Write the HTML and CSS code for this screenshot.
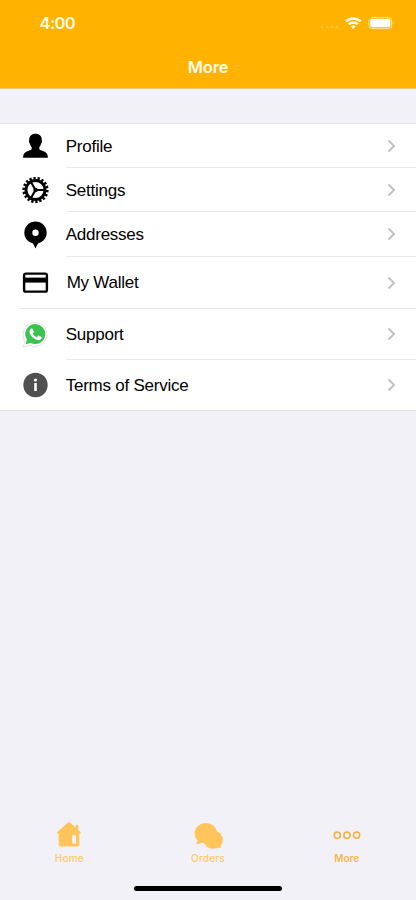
FILE: index.html
```
<!DOCTYPE html>
<html lang="en">
<head>
<meta charset="utf-8">
<meta name="viewport" content="width=device-width, initial-scale=1">
<title>More</title>
<link rel="stylesheet" href="styles.css">
</head>
<body>
<div class="screen">
  <header class="header">
    <div class="status">
      <span class="time">4:00</span>
      <svg class="indicators" width="76" height="16" viewBox="0 0 76 16">
        <g fill="#ffc134"><circle cx="2" cy="12" r="1.600"/><circle cx="7" cy="12" r="1.600"/><circle cx="12" cy="12" r="1.600"/><circle cx="17" cy="12" r="1.600"/></g>
        <g fill="none" stroke="#fffbe6" stroke-width="2.500"><path d="M26.100 6.300a10.400 10.400 0 0 1 14.400 0"/><path d="M28.700 9.300a6.500 6.500 0 0 1 9.200 0"/></g>
        <path d="M30.900 11.400a3.600 3.600 0 0 1 4.800 0l-2.400 2.600z" fill="#fffbe6"/>
        <rect x="48.900" y="2.400" width="22.800" height="11.200" rx="3.200" fill="none" stroke="#ffdf91"/>
        <rect x="50.200" y="3.800" width="20.200" height="8.400" rx="1.800" fill="#fff"/>
        <path d="M73.200 6.200q1.700 1.800 0 3.600z" fill="#ffdf91"/>
      </svg>
    </div>
    <h1 class="title">More</h1>
  </header>

  <main class="list">
    <a class="row">
      <svg class="icon" viewBox="0 0 28 28"><path d="M14 1.800c4 0 6.300 2.400 6.300 6.100 0 1 .3 1 .2 2.200-.1 1-.8 1.200-1 2-.4 1.800-1.700 2.700-1.800 3.800 0 1.300.6 2 1.800 2.400 3.500 1.200 6.900 2 6.900 7.500H1.600c0-5.500 3.400-6.300 6.900-7.500 1.200-.4 1.800-1.100 1.800-2.400-.1-1.100-1.400-2-1.800-3.800-.2-.8-.9-1-1-2-.1-1.200.2-1.200.2-2.200C7.700 4.200 10 1.800 14 1.800z"/></svg>
      <div class="cell"><span class="label">Profile</span><svg class="chevron" viewBox="0 0 9 14"><path d="M1.500 1.500L7 7l-5.500 5.500"/></svg></div>
    </a>
    <a class="row">
      <svg class="icon" viewBox="0 0 28 28"><g fill="none" stroke="#000"><circle cx="14" cy="14" r="9.500" stroke-width="2.900"/><circle cx="14" cy="14" r="11.800" stroke-width="2.600" pathLength="72" stroke-dasharray="2.200 1.800"/><path d="M14.500 14H24M14 14L9.300 5.800M14 14L9.300 22.200" stroke-width="2.100"/></g><circle cx="14" cy="14" r="2.200"/></svg>
      <div class="cell"><span class="label settings">Settings</span><svg class="chevron" viewBox="0 0 9 14"><path d="M1.500 1.500L7 7l-5.500 5.500"/></svg></div>
    </a>
    <a class="row addresses">
      <svg class="icon" viewBox="0 0 28 28"><path fill-rule="evenodd" d="M14 .5A11.200 11.200 0 0 0 2.800 11.700c0 5 3.200 8.800 7.800 10.400 1.500.6 2 3 3.400 5.300 1.400-2.300 1.900-4.700 3.400-5.300 4.600-1.600 7.800-5.400 7.800-10.400A11.200 11.200 0 0 0 14 .5zm0 8a3.200 3.200 0 1 1 0 6.400 3.200 3.200 0 0 1 0-6.400z"/></svg>
      <div class="cell"><span class="label">Addresses</span><svg class="chevron" viewBox="0 0 9 14"><path d="M1.500 1.500L7 7l-5.500 5.500"/></svg></div>
    </a>
    <a class="row wallet">
      <svg class="icon" viewBox="0 0 28 28"><rect x="2.600" y="4.600" width="22.800" height="18" rx="1.700" fill="none" stroke="#000" stroke-width="2.400"/><path d="M2 8.600h24v5H2z"/></svg>
      <div class="cell"><span class="label">My Wallet</span><svg class="chevron" viewBox="0 0 9 14"><path d="M1.500 1.500L7 7l-5.500 5.500"/></svg></div>
    </a>
    <a class="row tall">
      <svg class="icon" viewBox="0 0 28 28"><path d="M1.700 26l1.700-6.100A12 12 0 1 1 8.400 24.300z" fill="#fff" stroke="#d8dcd9" stroke-width=".8"/><path d="M4.100 23.300l1.300-4.700A10 10 0 1 1 9.200 22z" fill="#3cc251"/><path d="M9.600 7.800c.5-.5 1.300-.4 1.600.2l1 2.300c.2.500.1.900-.3 1.300l-.7.800c.9 1.800 2.300 3 4.100 3.800l1.100-1.300c.3-.4.700-.5 1.200-.2l2.100 1c.5.300.6.700.4 1.300-.4 1.600-2 2.500-3.700 2.100-4.300-1-7.400-4-8.300-7.500-.4-1.500.3-2.900 1.500-3.800z" fill="#fff"/></svg>
      <div class="cell"><span class="label support">Support</span><svg class="chevron" viewBox="0 0 9 14"><path d="M1.500 1.500L7 7l-5.500 5.500"/></svg></div>
    </a>
    <a class="row tall">
      <svg class="icon" viewBox="0 0 28 28"><circle cx="14" cy="14" r="12.200" fill="#505050"/><g fill="#fff"><circle cx="14" cy="9" r="1.600"/><path d="M12.700 12h2.600v8h-2.600z"/></g></svg>
      <div class="cell"><span class="label">Terms of Service</span><svg class="chevron" viewBox="0 0 9 14"><path d="M1.500 1.500L7 7l-5.500 5.500"/></svg></div>
    </a>
  </main>

  <nav class="tabs">
    <a class="tab">
      <svg width="28" height="28" viewBox="0 0 28 28"><path fill="#ffc55c" fill-rule="evenodd" d="M14 1.200q.7 0 1.300.5l5.400 4.800V4.800q0-1 1.300-1t1.300 1v4.100l2.200 2q1 1.500-.8 1.500h-.4v11.400q0 1.600-1.600 1.600H5.300q-1.600 0-1.600-1.600V12.400h-.6q-1.900 0-.8-1.500l10.400-9.200q.6-.5 1.300-.5zM17.200 14.200v8.400h3.800v-8.400z"/></svg>
      <span>Home</span>
    </a>
    <a class="tab">
      <svg width="32" height="28" viewBox="0 0 32 28"><g fill="#ffc55c"><ellipse cx="13.800" cy="12.200" rx="11.200" ry="10.200"/><path d="M5 17.500l.8 2.800-2 2.100q3.800.8 6.700-1z"/><ellipse cx="21.200" cy="18.700" rx="9.800" ry="9.100"/><path d="M28.500 22l.1 3.200.7 1.600q-4 .4-5-1z"/></g></svg>
      <span>Orders</span>
    </a>
    <a class="tab active">
      <svg width="28" height="28" viewBox="0 0 28 28"><g fill="none" stroke="#f5b03c" stroke-width="1.500"><circle cx="4.300" cy="14.200" r="3.100"/><circle cx="14" cy="14.200" r="3.100"/><circle cx="23.600" cy="14.200" r="3.100"/></g></svg>
      <span>More</span>
    </a>
  </nav>
  <div class="home-bar"></div>
</div>
</body>
</html>
```
FILE: styles.css
```
* { box-sizing: border-box; }
body { margin: 0; background: #f2f1f7; }
.screen {
  display: flex;
  flex-direction: column;
  width: 416px;
  height: 900px;
  overflow: hidden;
  font-family: "Liberation Sans", sans-serif;
}
.header {
  height: 89px;
  background: #ffb300;
  border-bottom: 1px solid #e9c889;
  color: #fffbe6;
  font-family: Inter, sans-serif;
}
.status {
  display: flex;
  justify-content: space-between;
  align-items: center;
  height: 46px;
  padding: 0 20px 0 39.500px;
}
.time { font-size: 16.500px; font-weight: 600; letter-spacing: -.6px; }
.title {
  margin: 9px 0 0;
  font-size: 16.500px;
  line-height: 24px;
  font-weight: 600;
  letter-spacing: -.2px;
  text-align: center;
}
.list {
  margin-top: 34px;
  background: #fff;
  border-top: 1px solid #e4e4e8;
  border-bottom: 1px solid #e0e0e5;
}
.row { display: flex; align-items: center; height: 44px; padding-left: 21px; }
.icon { flex: none; width: 29px; height: 28px; margin-right: 15.700px; }
.cell {
  flex: 1;
  align-self: stretch;
  display: flex;
  justify-content: space-between;
  align-items: center;
  padding-right: 20.500px;
  border-bottom: 1px solid #e9e9eb;
}
.addresses { height: 45px; }
.wallet { height: 52px; margin-left: 20px; padding-left: 1px; border-bottom: 1px solid #e4e4e6; }
.wallet .cell { border-bottom: 0; padding-left: 1px; }
.tall { height: 51px; }
.tall:last-child { height: 50px; }
.tall:last-child .cell { border-bottom: 0; }
.label { padding-top: 2px; font-size: 17px; line-height: 22px; letter-spacing: -0.240px; color: #000; white-space: nowrap; }
.wallet .label { padding-top: 1px; }
.chevron { width: 9px; height: 14px; fill: none; stroke: #c2c2c5; stroke-width: 2; }
.tabs {
  display: grid;
  grid-template-columns: repeat(3, 1fr);
  margin-top: auto;
  height: 65px;
  color: #ffc96a;
  font: 500 10px/14px Inter, sans-serif;
  letter-spacing: .2px;
}
.tab { display: flex; flex-direction: column; align-items: center; gap: 2px; }
.active { color: #f5b84f; font-weight: 600; letter-spacing: 0; }
.home-bar { width: 148px; height: 5px; border-radius: 3px; background: #000; margin: 0 auto 9px; }
```
